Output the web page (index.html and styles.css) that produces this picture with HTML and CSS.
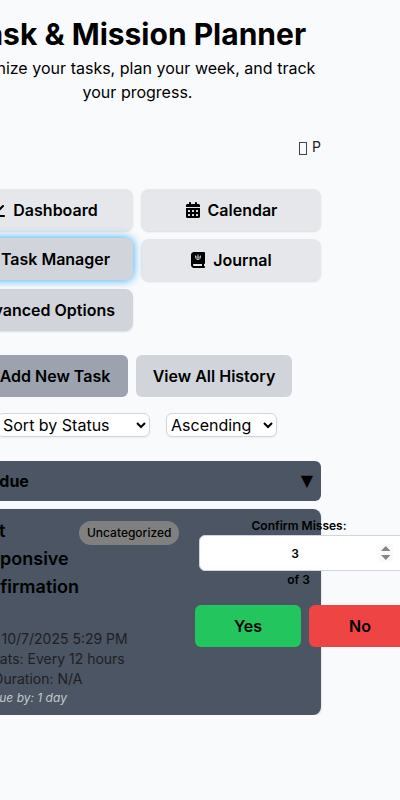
FILE: index.html
```html
<!DOCTYPE html>
<html lang="en">
<head>
<meta charset="utf-8">
<title>Task &amp; Mission Planner</title>
<link rel="stylesheet" href="styles.css">
</head>
<body>
<main class="app">
  <header class="header">
    <h1>Task &amp; Mission Planner</h1>
    <p>Organize your tasks, plan your week, and track your progress.</p>
  </header>
  <div class="status"><span class="status-icon"></span>P</div>
  <nav class="nav">
    <button class="btn tab"><svg class="icon" viewBox="0 0 512 512"><path d="M64 64c0-17.700-14.300-32-32-32S0 46.300 0 64v336c0 44.200 35.800 80 80 80h400c17.700 0 32-14.300 32-32s-14.300-32-32-32H80c-8.800 0-16-7.200-16-16V64zm406.600 86.600c12.500-12.500 12.500-32.800 0-45.300s-32.800-12.500-45.300 0L320 210.700l-57.400-57.300c-12.500-12.500-32.800-12.500-45.300 0l-112 112c-12.500 12.500-12.500 32.800 0 45.300s32.800 12.500 45.300 0l89.400-89.400 57.400 57.300c12.500 12.500 32.800 12.500 45.300 0l128-128z"/></svg>Dashboard</button>
    <button class="btn tab"><svg class="icon icon-narrow" viewBox="0 0 448 512"><path fill-rule="evenodd" d="M96 32V64H48C21.500 64 0 85.500 0 112v48h448v-48c0-26.500-21.500-48-48-48h-48V32c0-17.700-14.300-32-32-32s-32 14.300-32 32v32H160V32c0-17.700-14.300-32-32-32S96 14.300 96 32zM0 192h448v272c0 26.500-21.500 48-48 48H48c-26.500 0-48-21.500-48-48zM64 272v32q0 16 16 16h32q16 0 16-16v-32q0-16-16-16H80q-16 0-16 16zm128 0v32q0 16 16 16h32q16 0 16-16v-32q0-16-16-16h-32q-16 0-16 16zm128 0v32q0 16 16 16h32q16 0 16-16v-32q0-16-16-16h-32q-16 0-16 16zM64 400v32q0 16 16 16h32q16 0 16-16v-32q0-16-16-16H80q-16 0-16 16zm128 0v32q0 16 16 16h32q16 0 16-16v-32q0-16-16-16h-32q-16 0-16 16zm128 0v32q0 16 16 16h32q16 0 16-16v-32q0-16-16-16h-32q-16 0-16 16z"/></svg>Calendar</button>
    <button class="btn tab active"><svg class="icon" viewBox="0 0 512 512"><path d="M30 80l40 40L140 40M30 240l40 40 70-80M220 90h260M220 250h260M160 410h320" fill="none" stroke="currentColor" stroke-width="60"/></svg>Task Manager</button>
    <button class="btn tab"><svg class="icon icon-narrow" viewBox="0 0 448 512"><path fill-rule="evenodd" d="M96 0C43 0 0 43 0 96v320c0 53 43 96 96 96h320c17.700 0 32-14.300 32-32s-14.300-32-32-32v-64c17.700 0 32-14.300 32-32V32c0-17.700-14.300-32-32-32zM96 384h256v64H96c-17.700 0-32-14.300-32-32s14.300-32 32-32z"/><path d="M144 112v52c0 100 160 100 160 0v-52M224 80v176M190 136v56M258 136v56" fill="none" stroke="#e5e7eb" stroke-width="26"/></svg>Journal</button>
    <button class="btn tab options">Advanced Options</button>
  </nav>
  <div class="actions">
    <button class="btn add">Add New Task</button>
    <button class="btn history">View All History</button>
  </div>
  <div class="sorting">
    <select class="sort-field"><option>Sort by Status</option></select>
    <select class="sort-order"><option>Ascending</option></select>
  </div>
  <section>
    <h2 class="group"><span>Overdue</span><span class="arrow">▼</span></h2>
    <article class="task">
      <div class="details">
        <div class="title-row">
          <h3><span class="lead">Test Responsive</span> Confirmation</h3>
          <span class="category">Uncategorized</span>
        </div>
        <div class="meta">
          <p class="due">Due: 10/7/2025 5:29 PM</p>
          <p class="repeat">Repeats: Every 12 hours</p>
          <p>Est. Duration: N/A</p>
        </div>
        <p class="overdue">Overdue by: 1 day</p>
      </div>
      <div class="confirm">
        <label for="misses">Confirm Misses:</label>
        <div class="field">
          <input id="misses" type="number" value="3">
          <svg class="stepper" viewBox="0 0 15 18"><path d="M0 0h15v18H0z" fill="#fafafa"/><path d="M3 7h9.500L7.750 2zM3 11h9.500l-4.750 5z" fill="#858585"/></svg>
        </div>
        <span class="total">of 3</span>
        <div class="answers">
          <button class="btn yes">Yes</button>
          <button class="btn no">No</button>
        </div>
      </div>
    </article>
  </section>
</main>
</body>
</html>
```
FILE: styles.css
```css
* { box-sizing: border-box; }
body { margin: 0; background: #f9fafb; color: #000; font: 16px/24px Inter, "Liberation Sans", sans-serif; overflow: hidden; }
h1, h2, h3, p { margin: 0; }
.app { width: 368px; margin-left: -47px; padding-top: 16px; }
.header { text-align: center; }
.header h1 { font-size: 30px; line-height: 36px; font-weight: 700; white-space: nowrap; margin: 0 -20px 4px; }
.header p { padding-left: 1px; word-spacing: 0.1px; }
.status { margin-top: 32px; height: 21px; line-height: 21px; font-size: 14px; color: #222; display: flex; justify-content: flex-end; align-items: center; gap: 5px; }
.status-icon { width: 8px; height: 13px; margin-top: 3px; border: 1px solid #444; }
.nav { display: grid; grid-template-columns: 180px 180px; gap: 8px; margin-top: 32px; }
.btn { border: 0; border-radius: 6px; height: 42px; padding: 0 16px; display: flex; align-items: center; justify-content: center; font: 600 16px/24px Inter, "Liberation Sans", sans-serif; color: #000; white-space: nowrap; }
.tab { padding: 0 15px 0 16px; background: #e5e7eb; border-radius: 8px; box-shadow: 0 1px 2px rgba(0,0,0,.12); }
.icon { width: 16px; height: 16px; margin-right: 8px; fill: currentColor; flex: none; }
.icon-narrow { width: 14px; }
.active { background: #d1d5db; box-shadow: 0 0 8px 1px #52b3f6; transform: translateY(-1px); }
.options { background: #d1d5db; }
.actions { display: flex; gap: 8px; margin: 24px 0 0 29px; }
.add { width: 146px; background: #9ca3af; }
.history { width: 156px; background: #d1d5db; }
.sorting { display: flex; gap: 16px; margin: 16px 0 24px 44px; }
select { height: 24px; padding: 0; border: 1px solid #d1d5db; border-radius: 6px; background: #fff; color: #000; font: 16px Inter, "Liberation Sans", sans-serif; box-shadow: 0 1px 2px rgba(0,0,0,.05); }
.sort-field { width: 153px; padding-left: 1px; }
.sort-order { width: 111px; }
.group { height: 40px; padding: 0 8px; display: flex; justify-content: space-between; align-items: center; border-radius: 6px; background: #4b5563; font-size: 16px; font-weight: 700; }
.group span:first-child { padding-left: 1px; }
.arrow { font: 16px/24px "DejaVu Sans", sans-serif; }
.task { height: 206px; margin-top: 8px; padding: 8px 12px; display: flex; gap: 16px; border-radius: 8px; background: #4b5563; box-shadow: 0 1px 3px rgba(0,0,0,.15); }
.details { width: 214px; flex: none; }
.title-row { display: flex; justify-content: space-between; align-items: flex-start; }
h3 { width: 114px; font-size: 18px; line-height: 28px; font-weight: 600; }
.lead { display: block; padding-left: 3px; }
.category { margin-top: 4px; height: 24px; padding: 0 8px; border-radius: 12px; background: #808080; font-size: 12px; font-weight: 500; }
.meta { margin-top: 28px; font-size: 14px; line-height: 20px; color: #1f2023; }
.due { padding-left: 2px; }
.repeat { padding-left: 1px; }
.overdue { color: #c4c7ca; font-size: 12px; line-height: 18px; font-style: italic; }
.confirm { width: 216px; flex: none; display: flex; flex-direction: column; align-items: center; font-size: 12px; line-height: 16px; font-weight: 600; }
.confirm label { margin-top: 1px; padding-right: 8px; }
.field { position: relative; width: 208px; height: 36px; margin: 1px 0; }
.field input { display: block; width: 208px; height: 36px; margin: 0; padding: 0 31px 0 15px; border: 1px solid #d1d5db; border-radius: 6px; background: #fff; text-align: center; font: 600 12px Inter, sans-serif; }
.field input::-webkit-inner-spin-button { appearance: none; display: none; }
.stepper { position: absolute; top: 9px; right: 14px; width: 15px; height: 18px; }
.total { padding-right: 9px; }
.answers { display: flex; gap: 8px; margin-top: 17px; }
.yes { width: 106px; background: #22c55e; }
.no { width: 102px; background: #ef4444; }
```
